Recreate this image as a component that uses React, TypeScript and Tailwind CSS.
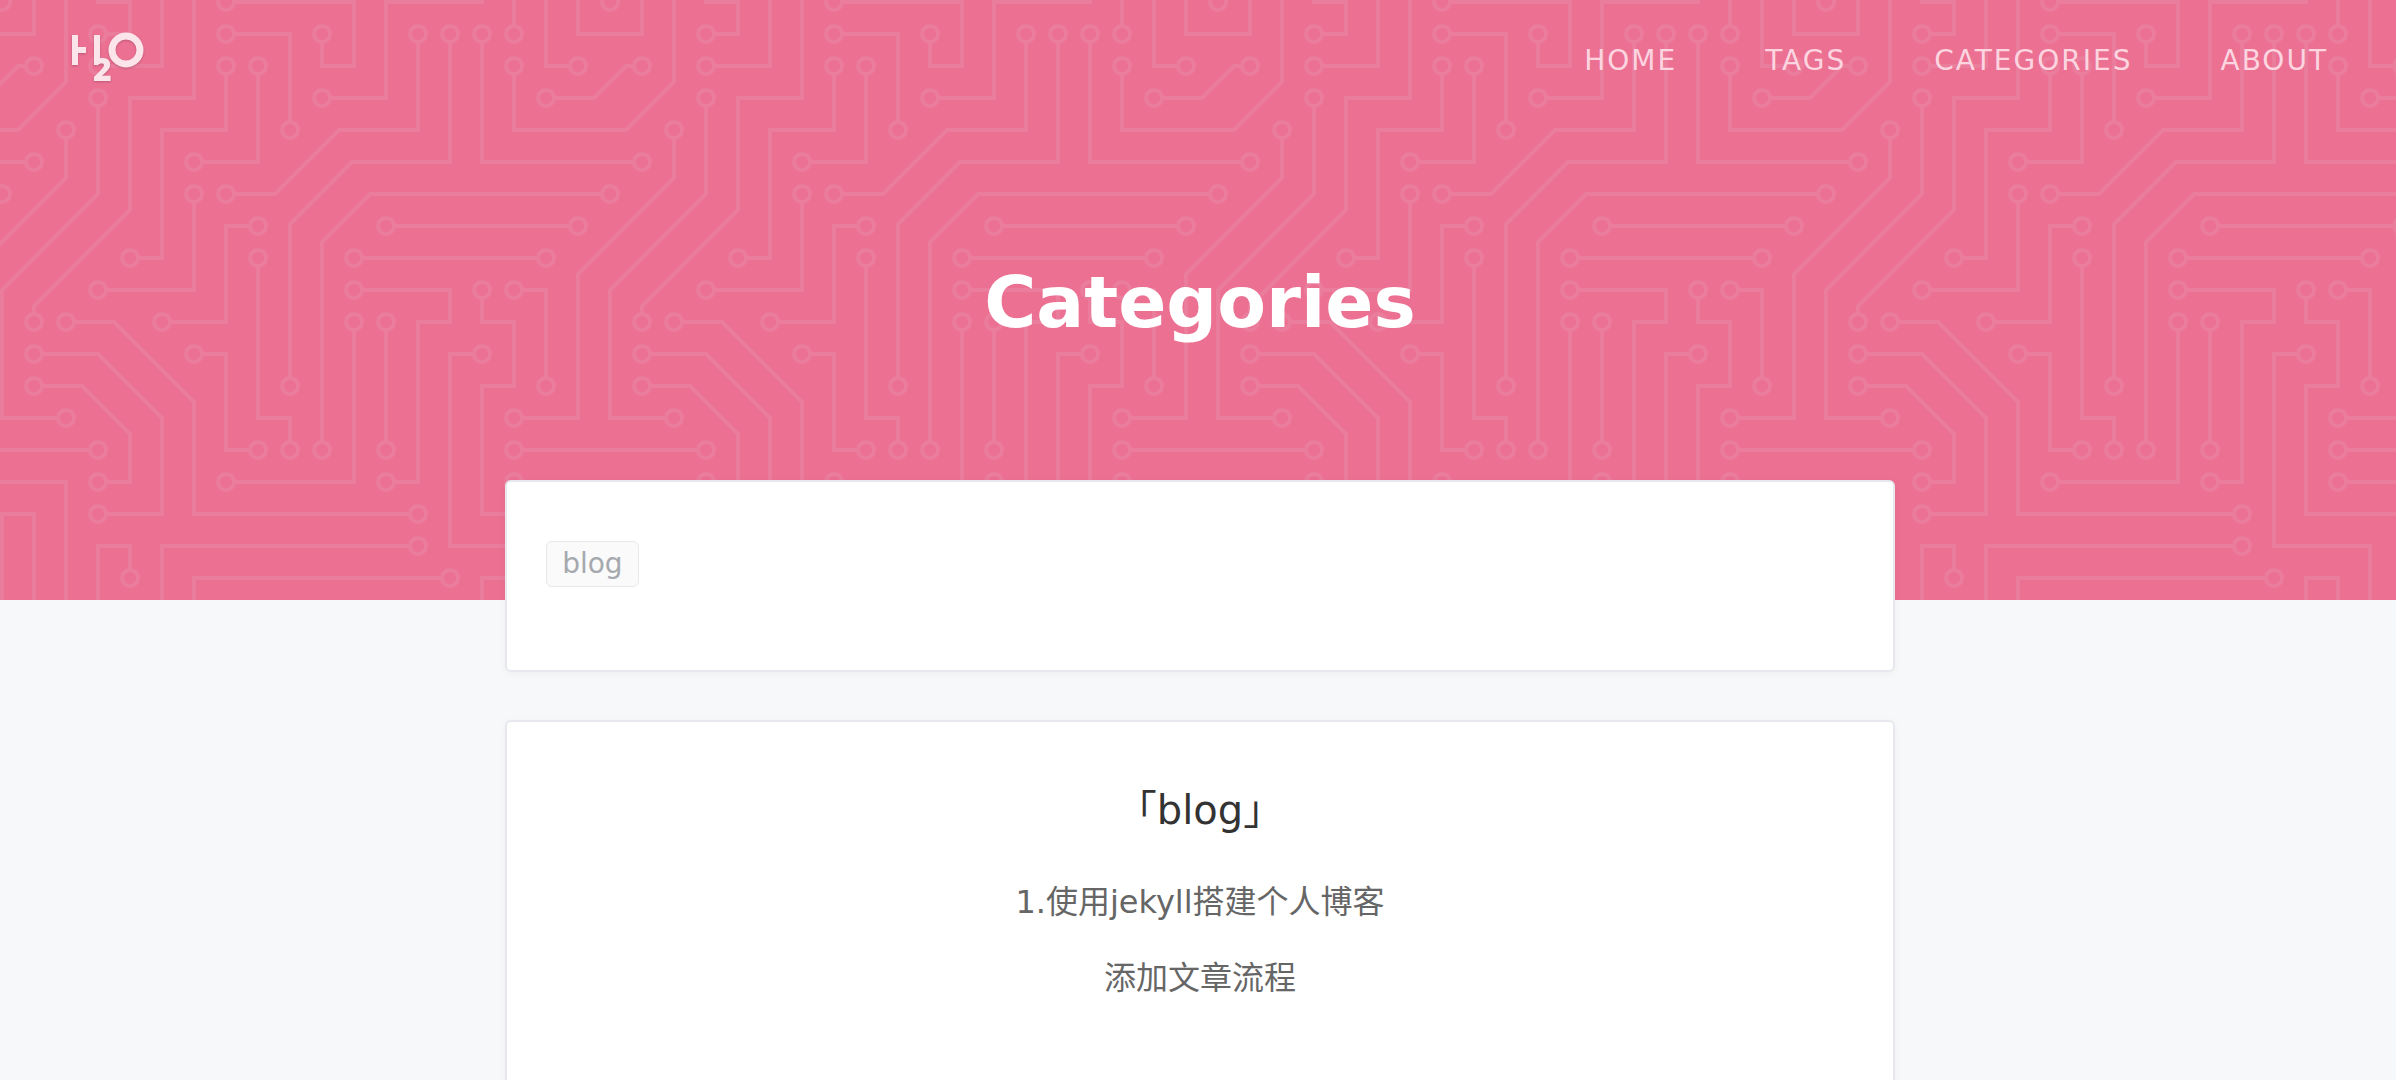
const TRACES = [
  'M0 225H45', 'M82 273H205', 'M81 272V304', 'M304 225H261', 'M304 241H261',
  'M269 129H181', 'M0 81H13', 'M197 113H285', 'M257 0V13', 'M193 221V165',
  'M241 21V81H304', 'M257 37V65H304', 'M129 133V209H145V221', 'M125 113H113V161H85',
  'M117 241H177V165', 'M101 177H113V225H125', 'M65 285V273H49V304',
  'M237 177H225V273H273V304', 'M261 145H273V189', 'M197 241H209V161H225V145H181',
  'M285 33H273V0', 'M97 101V145H53', 'M53 33H81V0', 'M113 37V65H81V129H69',
  'M101 81H129V37', 'M117 17H145V61', 'M221 289H97V304',
  'M241 149V161H257V193H241V257H289V304', 'M53 17H65V1H48', 'M165 49H193V1H242',
  'M117 1H177V33H161V21', 'M117 97H137.5L169.5 65H209V21',
  'M145 189V112L176 81H225V21', 'M161 221V121L185 97H301', 'M17 157V153L65 105V49H97V0',
  'M49 53V97L1 145V209H29', 'M33 69V89L-1 123', 'M13 33H9L-1 43', 'M277 49H297L305 41',
  'M261 209H289V137L305 121', 'M53 241H65V217L41 193H21', 'M205 257H97V201L57 161H37',
  'M53 257H81V209L49 177H21', 'M33 0V41L9 65H0', 'M1 301V257H17V304',
  'M33 304V241H0', 'M0 17H17V0', 'M289 0V17H304', 'M257 304V289H241V304',
];

const PADS: [number, number][] = [
  [49, 225], [209, 273], [257, 225], [257, 241], [273, 129], [177, 129], [17, 81],
  [193, 113], [289, 113], [257, 17], [193, 225], [193, 161], [241, 17], [257, 33],
  [129, 129], [145, 225], [129, 113], [81, 161], [113, 241], [177, 161], [97, 177],
  [129, 225], [65, 289], [241, 177], [257, 145], [273, 193], [193, 241], [177, 145],
  [289, 33], [97, 97], [49, 145], [49, 33], [113, 33], [65, 129], [97, 81], [129, 33],
  [113, 17], [145, 65], [225, 289], [241, 145], [49, 17], [161, 49], [113, 1],
  [113, 305], [161, 17], [113, 97], [209, 17], [145, 193], [225, 17], [161, 225],
  [1, 97], [305, 97], [17, 161], [49, 49], [33, 209], [33, 65], [17, 33], [273, 49],
  [257, 209], [49, 241], [17, 193], [209, 257], [33, 161], [49, 257], [17, 177],
  [1, 1], [305, 1], [1, 305], [305, 305],
];

function CircuitPattern() {
  return (
    <svg className="absolute inset-0 size-full" aria-hidden="true">
      <defs>
        <pattern id="circuit" width="608" height="608" patternUnits="userSpaceOnUse" viewBox="0 0 304 304">
          <g fill="none" stroke="#ea7c9c" strokeWidth="2">
            <path d={TRACES.join('')} />
            {PADS.map(([x, y]) => (
              <circle key={`${x}-${y}`} cx={x} cy={y} r="4" />
            ))}
          </g>
        </pattern>
      </defs>
      <rect width="100%" height="100%" fill="url(#circuit)" />
    </svg>
  );
}

function Logo() {
  return (
    <svg
      className="h-[50px] w-[74px] overflow-visible drop-shadow-[0_1px_1px_rgba(0,0,0,0.2)]"
      viewBox="0 0 74 50"
      role="img"
      aria-label="H2O"
    >
      <g fill="#fce4eb">
        <path d="M0 3h6v12h8v6H6v12H0z" />
        <path d="M22 3h6v24l-3 6h-3z" />
        <text x="21" y="49" className="font-['Open_Sans'] text-[32px] font-extrabold">2</text>
      </g>
      <circle cx="54" cy="18" r="14" fill="none" stroke="#fce4eb" strokeWidth="7" />
    </svg>
  );
}

const NAV = ['HOME', 'TAGS', 'CATEGORIES', 'ABOUT'];
const POSTS = ['1.使用jekyll搭建个人博客', '添加文章流程'];
const CARD = 'rounded-md border-2 border-[#e7e8ee] bg-white shadow-[0_2px_8px_rgba(0,0,0,0.04)]';

export default function App() {
  return (
    <div className="min-h-screen bg-[#f6f8fa] font-['DejaVu_Sans','Noto_Sans_CJK_SC',sans-serif]">
      <header className="relative h-[600px] bg-[#eb7092]">
        <CircuitPattern />
        <div className="relative flex items-start justify-between pr-[68px] pl-[72px]">
          <a href="#home" className="mt-8">
            <Logo />
          </a>
          <nav className="mt-[41px] flex gap-[88px]">
            {NAV.map((item) => (
              <a key={item} href={`#${item.toLowerCase()}`} className="text-[28px] leading-10 tracking-[2px] text-[#fcd5e0]">
                {item}
              </a>
            ))}
          </nav>
        </div>
        <h1 className="relative mt-[171px] pl-1 text-center text-[71px] leading-[100px] font-bold text-white">
          Categories
        </h1>
      </header>

      <div className="relative -mt-[120px] pl-1">
        <main className="mx-auto flex w-[58.1%] flex-col gap-12">
          <section className={`${CARD} h-48 px-[39px] pt-[59px]`}>
            <a
              href="#blog"
              className="inline-flex h-[46px] items-center rounded-md border border-[#e8e8e8] bg-[#fafafa] px-[15px] text-[28px] text-[#a5a9ae]"
            >
              blog
            </a>
          </section>
          <section id="blog" className={`${CARD} flex min-h-[400px] flex-col items-center pt-[58px] pb-10`}>
            <h2 className="text-[40px] leading-[60px] text-[#333]">「blog」</h2>
            <ul className="mt-6 text-center text-[32px] text-[#666]">
              {POSTS.map((post) => (
                <li key={post} className="leading-[76px]">
                  <a href="#post">{post}</a>
                </li>
              ))}
            </ul>
          </section>
        </main>
      </div>
    </div>
  );
}
